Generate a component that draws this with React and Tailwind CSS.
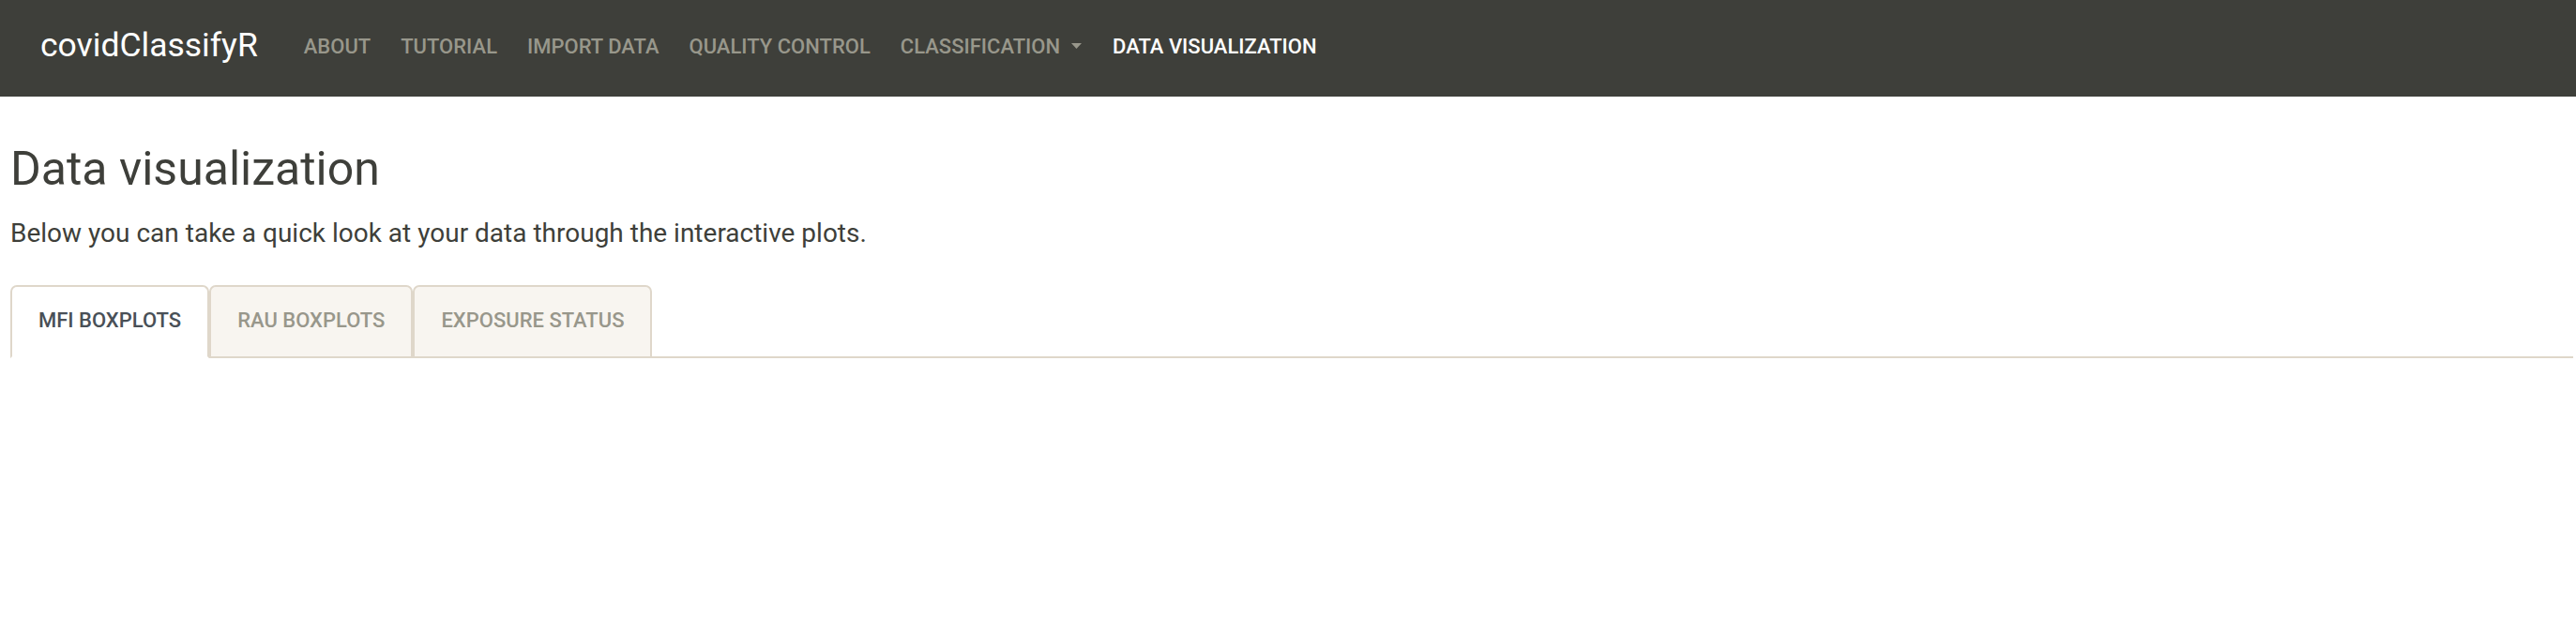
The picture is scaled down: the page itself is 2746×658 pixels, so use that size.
const links = ['About', 'Tutorial', 'Import data', 'Quality control'];
const tabs = ['MFI boxplots', 'RAU boxplots', 'Exposure status'];

function Caret() {
  return (
    <svg width="11" height="6" viewBox="0 0 11 6" className="ml-[12px]">
      <path d="M0 0 L11 0 L5.5 6 Z" fill="#98978b" />
    </svg>
  );
}

export default function App() {
  const active = 0;

  return (
    <div className="min-h-screen bg-white font-['Roboto','Liberation_Sans',sans-serif] text-[#3e3f3a]">
      <nav className="box-border flex h-[103px] items-center bg-[#3e3f3a] pb-[5px] pl-[43px]">
        <a className="text-[35.5px] leading-none text-white">covidClassifyR</a>
        <ul className="ml-[49px] flex items-center gap-[32px] text-[22px] font-medium uppercase text-[#98978b]">
          {links.map(function (l) {
            return <li key={l}>{l}</li>;
          })}
          <li className="flex items-center">
            Classification
            <Caret />
          </li>
          <li className="ml-[1px] text-white">Data visualization</li>
        </ul>
      </nav>

      <div className="pl-[11px] pr-[3px]">
        <h3 className="mt-[47px] text-[50px] font-normal leading-[1.2]">Data visualization</h3>
        <p className="mt-[18px] text-[28px] leading-[1.5]">
          Below you can take a quick look at your data through the interactive plots.
        </p>

        <ul className="mt-[34px] flex border-b-2 border-[#dfd7ca]">
          {tabs.map(function (t, i) {
            const on = i === active;
            return (
              <li
                key={t}
                className={
                  '-mb-[2px] box-border h-[78px] rounded-t-[7px] border-2 px-[28px] pt-[19px] text-[22px] font-medium uppercase leading-[1.5] ' +
                  (on
                    ? 'border-[#dfd7ca] border-b-white bg-white text-[#495057]'
                    : 'border-[#dfd7ca] bg-[#f8f5f0] text-[#98978b]')
                }
              >
                {t}
              </li>
            );
          })}
        </ul>
      </div>
    </div>
  );
}
